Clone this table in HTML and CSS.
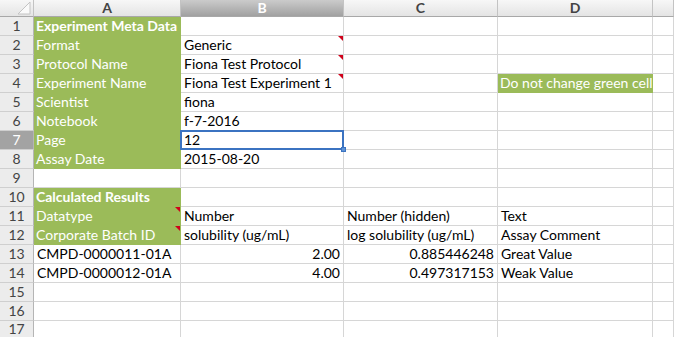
FILE: index.html
```html
<!DOCTYPE html>
<html>
<head>
    <title>Experiment Sheet</title>
    <link rel="stylesheet" href="styles.css">
</head>
<body>
    <div class="sheet">
        <div class="row head-row">
            <div class="corner">
                <svg width="14" height="14" viewBox="0 0 14 14"><polygon points="13,1 13,13 1,13" fill="#fafafa" stroke="#c4c4c4" stroke-width="1"/></svg>
            </div>
            <div class="col-head">A</div>
            <div class="col-head selected">B</div>
            <div class="col-head">C</div>
            <div class="col-head">D</div>
            <div class="col-head"></div>
        </div>

        <div class="row">
            <div class="num">1</div>
            <div class="cell green title">Experiment Meta Data</div>
            <div class="cell"></div>
            <div class="cell"></div>
            <div class="cell"></div>
            <div class="cell"></div>
        </div>
        <div class="row">
            <div class="num">2</div>
            <div class="cell green">Format</div>
            <div class="cell note">Generic</div>
            <div class="cell"></div>
            <div class="cell"></div>
            <div class="cell"></div>
        </div>
        <div class="row">
            <div class="num">3</div>
            <div class="cell green">Protocol Name</div>
            <div class="cell note">Fiona Test Protocol</div>
            <div class="cell"></div>
            <div class="cell"></div>
            <div class="cell"></div>
        </div>
        <div class="row">
            <div class="num">4</div>
            <div class="cell green">Experiment Name</div>
            <div class="cell note">Fiona Test Experiment 1</div>
            <div class="cell"></div>
            <div class="cell green">Do not change green cells</div>
            <div class="cell"></div>
        </div>
        <div class="row">
            <div class="num">5</div>
            <div class="cell green">Scientist</div>
            <div class="cell">fiona</div>
            <div class="cell"></div>
            <div class="cell"></div>
            <div class="cell"></div>
        </div>
        <div class="row">
            <div class="num">6</div>
            <div class="cell green">Notebook</div>
            <div class="cell">f-7-2016</div>
            <div class="cell"></div>
            <div class="cell"></div>
            <div class="cell"></div>
        </div>
        <div class="row">
            <div class="num selected">7</div>
            <div class="cell green">Page</div>
            <div class="cell active">12<span class="handle"></span></div>
            <div class="cell"></div>
            <div class="cell"></div>
            <div class="cell"></div>
        </div>
        <div class="row">
            <div class="num">8</div>
            <div class="cell green">Assay Date</div>
            <div class="cell">2015-08-20</div>
            <div class="cell"></div>
            <div class="cell"></div>
            <div class="cell"></div>
        </div>
        <div class="row">
            <div class="num">9</div>
            <div class="cell"></div>
            <div class="cell"></div>
            <div class="cell"></div>
            <div class="cell"></div>
            <div class="cell"></div>
        </div>
        <div class="row">
            <div class="num">10</div>
            <div class="cell green title">Calculated Results</div>
            <div class="cell"></div>
            <div class="cell"></div>
            <div class="cell"></div>
            <div class="cell"></div>
        </div>
        <div class="row">
            <div class="num">11</div>
            <div class="cell green note">Datatype</div>
            <div class="cell">Number</div>
            <div class="cell">Number (hidden)</div>
            <div class="cell">Text</div>
            <div class="cell"></div>
        </div>
        <div class="row">
            <div class="num">12</div>
            <div class="cell green note">Corporate Batch ID</div>
            <div class="cell">solubility (ug/mL)</div>
            <div class="cell">log solubility (ug/mL)</div>
            <div class="cell">Assay Comment</div>
            <div class="cell"></div>
        </div>
        <div class="row">
            <div class="num">13</div>
            <div class="cell">CMPD-0000011-01A</div>
            <div class="cell number">2.00</div>
            <div class="cell number">0.885446248</div>
            <div class="cell">Great Value</div>
            <div class="cell"></div>
        </div>
        <div class="row">
            <div class="num">14</div>
            <div class="cell">CMPD-0000012-01A</div>
            <div class="cell number">4.00</div>
            <div class="cell number">0.497317153</div>
            <div class="cell">Weak Value</div>
            <div class="cell"></div>
        </div>
        <div class="row">
            <div class="num">15</div>
            <div class="cell"></div>
            <div class="cell"></div>
            <div class="cell"></div>
            <div class="cell"></div>
            <div class="cell"></div>
        </div>
        <div class="row">
            <div class="num">16</div>
            <div class="cell"></div>
            <div class="cell"></div>
            <div class="cell"></div>
            <div class="cell"></div>
            <div class="cell"></div>
        </div>
        <div class="row last-row">
            <div class="num">17</div>
            <div class="cell"></div>
            <div class="cell"></div>
            <div class="cell"></div>
            <div class="cell"></div>
            <div class="cell"></div>
        </div>
    </div>
</body>
</html>
```

FILE: styles.css
```css
body {
    margin: 0;
    background: white;
    font-family: Lato, "Open Sans", sans-serif;
    overflow: hidden;
}

.sheet {
    width: 674px;
}

.row {
    display: grid;
    grid-template-columns: 34px 147px 163px 154px 155px 1fr;
    height: 19px;
}

.head-row {
    height: 17px;
}

.last-row {
    height: 16px;
}

.corner,
.col-head {
    box-sizing: border-box;
    background: linear-gradient(#f7f7f7, #e4e4e4);
    border-right: 1px solid #c3c3c3;
    border-bottom: 1px solid #a8a8a8;
}

.corner {
    display: flex;
    justify-content: flex-end;
    align-items: flex-end;
    padding: 0 2px 1px 0;
}

.corner svg {
    display: block;
}

.col-head {
    text-align: center;
    font-size: 14px;
    font-weight: bold;
    color: #444;
    line-height: 16px;
}

.col-head.selected {
    background: linear-gradient(#cbcbcb, #a1a1a1);
    color: white;
}

.num {
    box-sizing: border-box;
    background: #ececec;
    border-right: 1px solid #b5b5b5;
    border-bottom: 1px solid #cfcfcf;
    text-align: center;
    font-size: 14px;
    color: #444;
    line-height: 18px;
}

.last-row .num {
    line-height: 16px;
}

.num.selected {
    background: #a3a3a3;
    color: white;
}

.cell {
    position: relative;
    box-sizing: border-box;
    border-right: 1px solid #d6d6d6;
    border-bottom: 1px solid #d6d6d6;
    padding: 0 3px;
    font-size: 14px;
    line-height: 18px;
    color: black;
    white-space: nowrap;
    overflow: hidden;
}

.green {
    background: #9bbb59;
    border-color: #9bbb59;
    color: white;
    padding-left: 2px;
}

.title {
    font-weight: bold;
}

.number {
    text-align: right;
}

.note::after {
    content: "";
    position: absolute;
    top: 0;
    right: 0;
    border-top: 5px solid #d0021b;
    border-left: 5px solid transparent;
}

.active {
    overflow: visible;
}

.active::before {
    content: "";
    position: absolute;
    left: -1px;
    top: -1px;
    right: -1px;
    bottom: -1px;
    border: 2px solid #3b73c1;
}

.handle {
    position: absolute;
    right: -3px;
    bottom: -3px;
    width: 5px;
    height: 5px;
    box-sizing: border-box;
    background: #5e93d6;
    border: 1px solid #3b73c1;
    z-index: 1;
}
```
